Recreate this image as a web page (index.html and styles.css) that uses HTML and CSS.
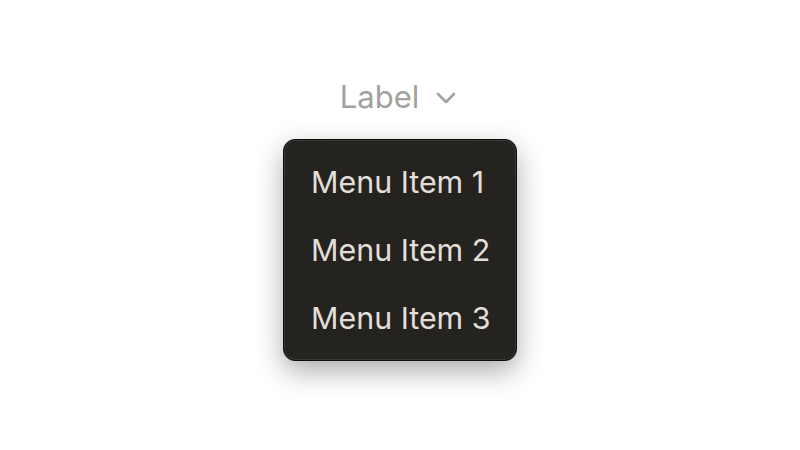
FILE: index.html
```html
<!DOCTYPE html>
<html lang="en">
<head>
  <meta charset="UTF-8">
  <meta name="viewport" content="width=device-width, initial-scale=1">
  <title>Dropdown</title>
  <link rel="stylesheet" href="styles.css">
</head>
<body>
  <div class="dropdown">
    <button class="trigger">
      <span>Label</span>
      <svg class="chevron" width="20" height="12" viewBox="0 0 20 12">
        <path d="M2 2 L10 10 L18 2" fill="none" stroke="currentColor" stroke-width="2.6" stroke-linecap="round" stroke-linejoin="round"/>
      </svg>
    </button>
    <ul class="menu">
      <li>Menu Item 1</li>
      <li>Menu Item 2</li>
      <li>Menu Item 3</li>
    </ul>
  </div>
</body>
</html>
```

FILE: styles.css
```css
body {
  margin: 0;
  height: 100vh;
  background: #fff;
  font-family: Inter, 'Noto Sans', sans-serif;
}

.dropdown {
  display: flex;
  flex-direction: column;
  align-items: center;
  padding-top: 76px;
}

.trigger {
  display: flex;
  align-items: center;
  gap: 17px;
  height: 40px;
  padding: 0;
  margin-left: -4px;
  border: none;
  background: none;
  font-family: inherit;
  font-size: 31px;
  color: #a3a19d;
  cursor: pointer;
}

.chevron {
  margin-top: 3px;
}

.menu {
  list-style: none;
  margin: 23px 0 0;
  padding: 8px 0;
  width: 232px;
  background: #252320;
  border: 1px solid #0c0c0b;
  border-radius: 12px;
  box-shadow: inset 0 0 0 1px #3b3a36, 0 10px 28px rgba(0, 0, 0, 0.33);
}

.menu li {
  height: 68px;
  display: flex;
  align-items: center;
  padding-left: 27px;
  white-space: nowrap;
  font-size: 30.4px;
  color: #e2dfda;
}
```
